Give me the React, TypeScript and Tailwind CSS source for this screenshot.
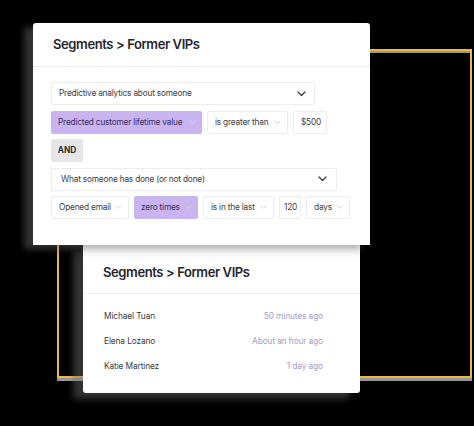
import React from "react";

function Chevron({ light }: { light?: boolean }) {
  return light ? (
    <svg
      width="7"
      height="5"
      viewBox="0 0 7 5"
      fill="none"
      stroke="#d4d4dc"
      strokeWidth={1}
      strokeLinecap="round"
      strokeLinejoin="round"
      className="shrink-0"
    >
      <path d="M1 1l2.5 2.5L6 1" />
    </svg>
  ) : (
    <svg
      width="9"
      height="6"
      viewBox="0 0 9 6"
      fill="none"
      stroke="#3a3a3a"
      strokeWidth={1.3}
      strokeLinecap="round"
      strokeLinejoin="round"
      className="shrink-0"
    >
      <path d="M1 1l3.5 3.5L8 1" />
    </svg>
  );
}

function Box({
  children,
  className = "",
  purple,
  chevron,
}: {
  children: React.ReactNode;
  className?: string;
  purple?: boolean;
  chevron?: "light" | "dark";
}) {
  return (
    <div
      className={`h-[23px] flex items-center justify-between gap-[4px] rounded-[2px] pl-[7px] pr-[6px] text-[8.3px] tracking-[-0.2px] whitespace-nowrap ${
        purple
          ? "bg-[#c8b4f1] text-[#3b2d5a]"
          : "bg-white border border-[#ededf0] text-[#3d3d42]"
      } ${className}`}
    >
      <span>{children}</span>
      {chevron && <Chevron light={chevron === "light"} />}
    </div>
  );
}

const people = [
  { name: "Michael Tuan", when: "50 minutes ago" },
  { name: "Elena Lozano", when: "About an hour ago" },
  { name: "Katie Martinez", when: "1 day ago" },
];

export default function App() {
  return (
    <div
      className="relative w-[474px] h-[426px] bg-black overflow-hidden pt-[23px]"
      style={{ fontFamily: "Inter, 'Noto Sans', sans-serif" }}
    >
      {/* yellow frame behind the cards */}
      <div className="absolute left-[57px] top-[49px] w-[415px] h-[329px] border-2 border-[#f0b840] shadow-[inset_0_2px_0_rgba(190,190,190,0.8),0_3px_0_rgba(190,190,190,0.8)]" />

      <div className="relative z-20 ml-[33px] w-[337px] bg-white rounded-t-[3px] shadow-[-9px_4px_6px_rgba(110,110,110,0.45),0_8px_10px_rgba(0,0,0,0.07)]">
        <div className="h-[44px] flex items-center pl-[20px] border-b border-[#ececef]">
          <h1 className="text-[13px] font-semibold tracking-[-0.4px] text-[#26262b]">
            Segments &gt; Former VIPs
          </h1>
        </div>
        <div className="pt-[15px] pb-[26px] pl-[18px] flex flex-col gap-[5.5px]">
          <Box className="w-[264px] pr-[8px]" chevron="dark">
            Predictive analytics about someone
          </Box>
          <div className="flex gap-[5px]">
            <Box purple className="w-[151px]" chevron="light">
              Predicted customer lifetime value
            </Box>
            <Box className="w-[81px]" chevron="light">
              is greater than
            </Box>
            <Box className="w-[34px]">$500</Box>
          </div>
          <div className="h-[23px] w-[32px] flex items-center justify-center rounded-[2px] bg-[#e6e6e8] text-[8.3px] font-bold text-[#2e2e33]">
            AND
          </div>
          <Box className="w-[286px] pl-[9px] pr-[9px]" chevron="dark">
            What someone has done (or not done)
          </Box>
          <div className="flex gap-[5px]">
            <Box className="w-[78px]" chevron="light">
              Opened email
            </Box>
            <Box purple className="w-[64px]" chevron="light">
              zero times
            </Box>
            <Box className="w-[71px]" chevron="light">
              is in the last
            </Box>
            <Box className="w-[22px] justify-center px-0">120</Box>
            <Box className="w-[44px]" chevron="light">
              days
            </Box>
          </div>
        </div>
      </div>

      <div className="relative z-10 ml-[83px] w-[277px] h-[148px] bg-white rounded-b-[3px] shadow-[-10px_6px_6px_rgba(110,110,110,0.45)]">
        <div className="h-[49px] flex items-end pb-[11px] pl-[20px] border-b border-[#efeff1]">
          <h2 className="text-[13px] font-semibold tracking-[-0.4px] text-[#26262b]">
            Segments &gt; Former VIPs
          </h2>
        </div>
        <div className="pt-[10px] pl-[21px] pr-[37px] flex flex-col">
          {people.map((p) => (
            <div key={p.name} className="h-[25px] flex items-center justify-between text-[8.3px] tracking-[-0.1px]">
              <span className="text-[#3a3a40]">{p.name}</span>
              <span className="text-[#a39bc6]">{p.when}</span>
            </div>
          ))}
        </div>
      </div>
    </div>
  );
}
